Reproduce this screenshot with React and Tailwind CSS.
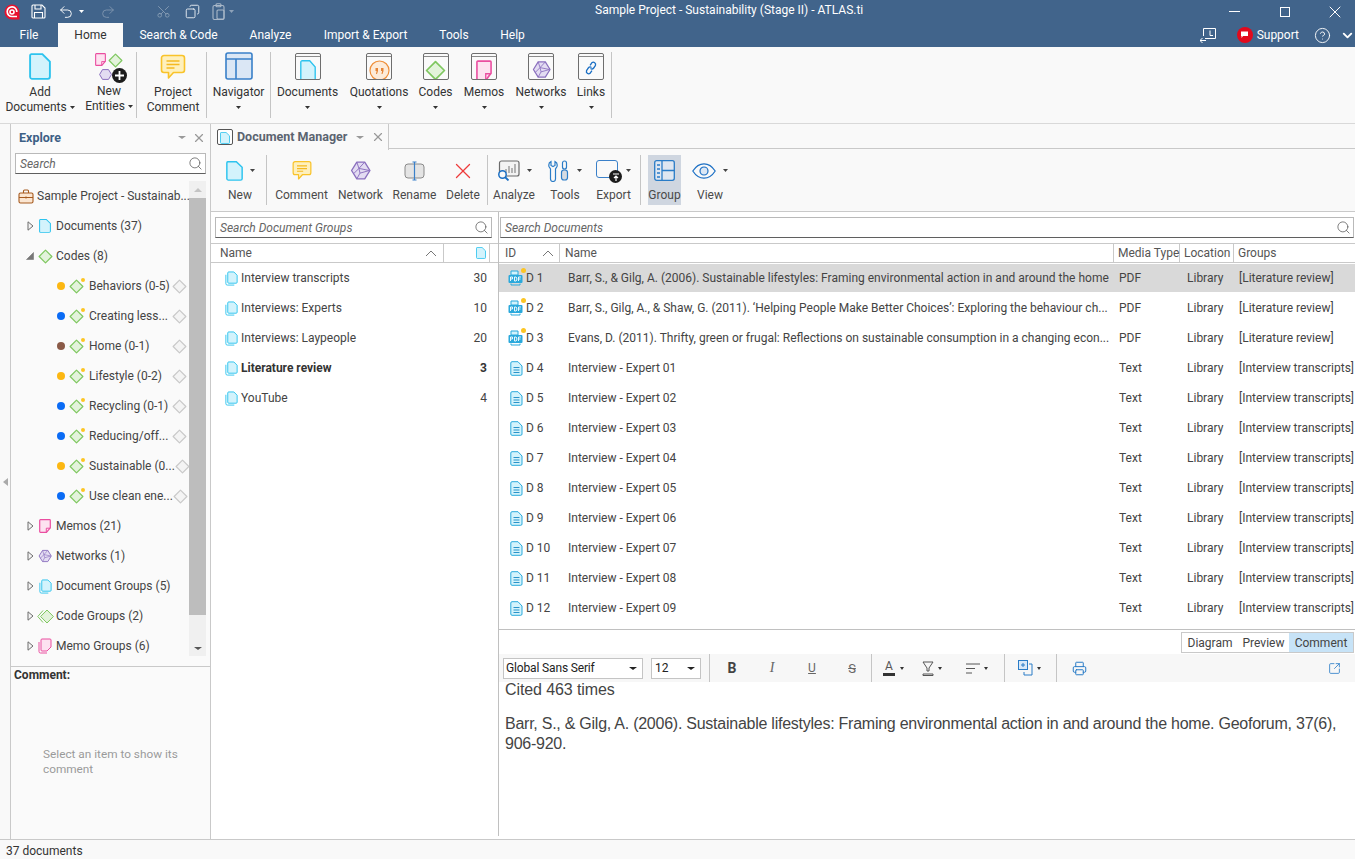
import React from 'react';
import { Undo2, Redo2, Scissors, Copy, Search, X, CircleHelp, ChevronDown, Printer, SquareArrowOutUpRight } from 'lucide-react';

const Caret = ({ c = '#444', s = 5 }) => (
  <svg width={s} height={3} viewBox="0 0 5 3" preserveAspectRatio="none" className="shrink-0"><path d="M0 0h5L2.500 3z" fill={c} /></svg>
);

const DocI = ({ w = 14, h = 18 }) => (
  <svg width={w} height={h} viewBox="0 0 14 18" preserveAspectRatio="none" className="shrink-0"><path d="M1.500.7h7l4.800 5v10.200a1.300 1.300 0 0 1-1.300 1.300H1.800A1.300 1.300 0 0 1 .7 16V1.700A1 1 0 0 1 1.500.7z" fill="#d3f3fc" stroke="#2dc3ee" strokeWidth="1.200" /></svg>
);
const DocGroupI = ({ size = 16 }) => (
  <svg width={size} height={size} viewBox="0 0 16 16" className="shrink-0"><path d="M5 1h5.500L14 4.500V12a1 1 0 0 1-1 1H5a1 1 0 0 1-1-1V2a1 1 0 0 1 1-1z" fill="#d3f3fc" stroke="#2dc3ee" /><path d="M2 4v9.500A1.500 1.500 0 0 0 3.500 15H11" fill="none" stroke="#2dc3ee" /></svg>
);
const DocTextI = () => (
  <svg width={13} height={15} viewBox="0 0 13 15" className="shrink-0"><path d="M2 .7h6L12 5v8a1.300 1.300 0 0 1-1.300 1.300H2A1.300 1.300 0 0 1 .8 13V2A1.300 1.300 0 0 1 2 .7z" fill="#d3f3fc" stroke="#2aa9dc" /><path d="M3.500 6.500h6M3.500 9h6M3.500 11.500h6" stroke="#2a93c9" /></svg>
);
const PdfI = () => (
  <div className="relative w-[16px] h-[16px] shrink-0">
    <svg width={16} height={16} viewBox="0 0 16 16"><path d="M3 1h7v4H3z" fill="#d3f3fc" stroke="#2aa9dc" /><rect x=".5" y="5" width="14" height="8" rx="1" fill="#2aa9dc" /><path d="M3 13.500v1.500h9v-1.500" fill="none" stroke="#2aa9dc" /><path d="M2.500 7v4M2.500 7h2v2h-2M6.500 7v4h1.500l.8-1V8l-.8-1zM10.500 11V7h2.400M10.500 9h2" fill="none" stroke="#fff" strokeWidth=".9" /></svg>
    <span className="absolute right-[-2px] top-[-2px] w-[5px] h-[5px] rounded-full bg-[#fcc524]" />
  </div>
);
const Diamond = ({ size = 15, fill = '#e3f3db', stroke = '#7fc760', dot }) => (
  <div className="relative shrink-0" style={{ width: size, height: size }}>
    <svg width={size} height={size} viewBox="0 0 16 16"><path d="M8 1.200 14.800 8 8 14.800 1.200 8z" fill={fill} stroke={stroke} strokeWidth="1.300" strokeLinejoin="round" /></svg>
    {dot && <span className="absolute right-[-1px] top-[-1px] w-[4px] h-[4px] rounded-full bg-[#fcc524]" />}
  </div>
);
const DoubleDiamond = () => (
  <svg width={17} height={15} viewBox="0 0 17 15" className="shrink-0"><path d="M6 1.500 0.800 7.500 6 13.500" fill="none" stroke="#7fc760" /><path d="M10 1 16.400 7.500 10 14 3.600 7.500z" fill="#e3f3db" stroke="#7fc760" /></svg>
);
const MemoI = ({ w = 12, h = 14 }) => (
  <svg width={w} height={h} viewBox="0 0 12 14" preserveAspectRatio="none" className="shrink-0"><path d="M1.400.7h9.200a.7.7 0 0 1 .7.7v7.400L7.500 13.300H1.400a.7.7 0 0 1-.7-.7V1.400a.7.7 0 0 1 .7-.7z" fill="#fde2f0" stroke="#ea4ea0" strokeWidth="1.200" /><path d="M7.300 13V9.200h4" fill="none" stroke="#ea4ea0" /></svg>
);
const MemoGroupI = () => (
  <svg width={16} height={16} viewBox="0 0 16 16" className="shrink-0"><path d="M5 1h8a1 1 0 0 1 1 1v7l-4 4H5a1 1 0 0 1-1-1V2a1 1 0 0 1 1-1z" fill="#fde2f0" stroke="#ea4ea0" /><path d="M2 4v9.500A1.500 1.500 0 0 0 3.500 15H10" fill="none" stroke="#ea4ea0" /></svg>
);
const NetI = ({ size = 16 }) => (
  <svg width={size} height={size} viewBox="0 0 20 20" className="shrink-0"><path d="M6.500 2h7.500l5 8-5 8H6.500L1.500 10z" fill="#e3dcf2" stroke="#8a6fbe" strokeWidth="1.300" strokeLinejoin="round" /><path d="M6.500 2l2 6-5 5M8.500 8L14 2M8.500 8l10 2-9 2.500M9.500 12.500L6.500 18M9.500 12.500L8.500 8" fill="none" stroke="#8a6fbe" strokeWidth=".9" /></svg>
);
const CommentI = ({ w = 26, h = 26 }) => (
  <svg width={w} height={h} viewBox="0 0 26 26" className="shrink-0"><path d="M4 1.500h18A2.500 2.500 0 0 1 24.500 4v12a2.500 2.500 0 0 1-2.500 2.500h-8.500L8.500 24v-5.500H4A2.500 2.500 0 0 1 1.500 16V4A2.500 2.500 0 0 1 4 1.500z" fill="#fef0bd" stroke="#f9c32a" strokeWidth="1.600" strokeLinejoin="round" /><path d="M6.500 7h13M6.500 10.500h13M6.500 14h8" stroke="#f5b921" strokeWidth="1.500" /></svg>
);
const Frame = ({ children }) => (
  <div className="w-[26px] h-[27px] border-[1.5px] border-[#6e6e6e] rounded-[2px] bg-[#fafafa] flex flex-col overflow-hidden shrink-0">
    <div className="h-[3px] border-b-[1.5px] border-[#8a8a8a] shrink-0" />
    <div className="flex-1 flex justify-center items-start pt-[3px]">{children}</div>
  </div>
);
const Tri = () => (
  <svg width={7} height={10} viewBox="0 0 7 10" className="shrink-0"><path d="M1 .8 6 5 1 9.200z" fill="#f4f4f4" stroke="#6d6d6d" /></svg>
);
const TriOpen = () => (
  <svg width={8} height={8} viewBox="0 0 8 8" className="shrink-0"><path d="M7.500.5v7H.5z" fill="#777" stroke="#777" strokeWidth=".6" /></svg>
);
const Sep = ({ h = 'h-[66px]' }) => <div className={`w-px bg-[#c5c5c5] shrink-0 ${h}`} />;

const Ribbon = ({ w, label, label2, icon, inline, cls = '' }) => (
  <div className={`flex flex-col items-center shrink-0 h-full ${cls}`} style={{ width: w }}>
    <div className="h-[33px] flex items-end justify-center shrink-0">{icon}</div>
    <div className="mt-[5px] leading-[15px] text-center whitespace-nowrap h-[15px]">{label}</div>
    {label2 ? (
      <div className="leading-[15px] flex items-center gap-[3px] whitespace-nowrap">{label2}{inline && <Caret c="#333" />}</div>
    ) : (
      <div className="h-[15px] flex items-center justify-center"><Caret c="#333" /></div>
    )}
  </div>
);

const Tool = ({ w, label, icon, caret, active }) => (
  <div className={`flex flex-col items-center shrink-0 h-[50px] ${active ? 'bg-[#cfd6e0]' : ''}`} style={{ width: w }}>
    <div className="h-[32px] flex items-center justify-center gap-[7px] shrink-0">{icon}{caret && <Caret />}</div>
    <div className="leading-[16px] whitespace-nowrap text-[#4a4a4a]">{label}</div>
  </div>
);

const SearchBox = ({ w, text }) => (
  <div className="h-[21px] border border-[#b9b9b9] border-b-[#5f5f5f] bg-white flex items-center justify-between pl-[4px] pr-[2px]" style={w ? { width: w } : undefined}>
    <span className="italic text-[#666]">{text}</span>
    <Search size={15} strokeWidth={1.200} className="text-[#555]" />
  </div>
);

const TreeTop = ({ open, icon, label }) => (
  <div className="h-[30px] flex items-center text-[#444]">
    <div className="w-[27px] flex justify-end shrink-0 pr-[4px]">{open ? <TriOpen /> : <Tri />}</div>
    <div className="w-[18px] flex justify-center shrink-0 ml-[-2px] mr-[1px]">{icon}</div>
    <span className="ml-[1px] whitespace-nowrap">{label}</span>
  </div>
);
const TreeChild = ({ color, label }) => (
  <div className="h-[30px] flex items-center text-[#444] pl-[46px] pr-[2px]">
    <span className="w-[8px] h-[8px] rounded-full shrink-0" style={{ backgroundColor: color }} />
    <div className="ml-[4px] mr-[5px]"><Diamond dot size={15} /></div>
    <span className="whitespace-nowrap flex-1">{label}</span>
    <Diamond size={15} fill="#f4f4f4" stroke="#c9c9c9" />
  </div>
);

const groups = [
  ['Interview transcripts', 30], ['Interviews: Experts', 10], ['Interviews: Laypeople', 20], ['Literature review', 3, true], ['YouTube', 4],
];
const lit = '[Literature review]';
const tr = '[Interview transcripts]';
const docs = [
  ['D 1', 'Barr, S., & Gilg, A. (2006). Sustainable lifestyles: Framing environmental action in and around the home', 'PDF', lit, true],
  ['D 2', 'Barr, S., Gilg, A., & Shaw, G. (2011). ‘Helping People Make Better Choices’: Exploring the behaviour ch...', 'PDF', lit],
  ['D 3', 'Evans, D. (2011). Thrifty, green or frugal: Reflections on sustainable consumption in a changing econ...', 'PDF', lit],
  ['D 4', 'Interview - Expert 01', 'Text', tr], ['D 5', 'Interview - Expert 02', 'Text', tr], ['D 6', 'Interview - Expert 03', 'Text', tr],
  ['D 7', 'Interview - Expert 04', 'Text', tr], ['D 8', 'Interview - Expert 05', 'Text', tr], ['D 9', 'Interview - Expert 06', 'Text', tr],
  ['D 10', 'Interview - Expert 07', 'Text', tr], ['D 11', 'Interview - Expert 08', 'Text', tr], ['D 12', 'Interview - Expert 09', 'Text', tr],
];

const TopTab = ({ w, label, active }) => (
  <div className={`h-full flex items-center justify-center shrink-0 ${active ? 'bg-[#f9f9f9] text-[#333]' : 'text-white'}`} style={{ width: w }}>{label}</div>
);

export default function App() {
  return (
    <div className="w-[1355px] h-[859px] overflow-hidden bg-white flex flex-col font-['Roboto',sans-serif] text-[12px] text-[#444] antialiased">
      {/* title bar */}
      <div className="h-[23px] bg-[#41648b] flex items-center shrink-0 relative text-white">
        <div className="w-[20px] flex justify-end shrink-0">
          <svg width={16} height={16} viewBox="0 0 16 16" fill="none">
            <path d="M8 .5a7.500 7.500 0 0 0 0 15h7.500V8A7.500 7.500 0 0 0 8 .5z" fill="#e8112d" />
            <path d="M13 12.500H8A4.800 4.800 0 1 1 12.800 8" stroke="#fff" strokeWidth="1.700" />
            <circle cx="8" cy="8" r="2" stroke="#fff" strokeWidth="1.600" />
          </svg>
        </div>
        <div className="ml-[11px] w-[14px]">
          <svg width={15} height={15} viewBox="0 0 15 15" fill="none" stroke="#fff" strokeWidth="1.100"><path d="M2 1h9l3 3v9a1 1 0 0 1-1 1H2a1 1 0 0 1-1-1V2a1 1 0 0 1 1-1z" /><path d="M4 1v4h6V1M3.500 14V8.500h8V14" /></svg>
        </div>
        <div className="ml-[13px] flex items-center gap-[5px]"><Undo2 size={16} strokeWidth={1.400} /><Caret c="#fff" /></div>
        <div className="ml-[16px]"><Redo2 size={16} strokeWidth={1.400} className="text-[#7e94ae]" /></div>
        <div className="ml-[40px]"><Scissors size={15} strokeWidth={1.300} className="text-[#8ea2b9] -rotate-90" /></div>
        <div className="ml-[14px]"><Copy size={15} strokeWidth={1.500} className="text-[#e8edf2] scale-x-[-1]" /></div>
        <div className="ml-[12px] flex items-center gap-[4px]">
          <svg width={13} height={17} viewBox="0 0 13 17" fill="none" stroke="#a9b8c9" strokeWidth="1.100"><rect x="1" y="2.500" width="11" height="14" rx="1.500" /><rect x="4" y=".7" width="5" height="3" rx="1" /><rect x="5" y="7" width="7" height="9" rx="1" /></svg>
          <Caret c="#8ea2b9" />
        </div>
        <div className="absolute left-[595px] top-[2px] leading-[17px] whitespace-nowrap">Sample Project - Sustainability (Stage II) - ATLAS.ti</div>
        <div className="ml-auto flex items-center h-full">
          <div className="w-[40px] flex justify-center"><div className="w-[11px] h-px bg-white" /></div>
          <div className="w-[11px]" />
          <div className="w-[40px] flex justify-center"><div className="w-[10px] h-[10px] border border-white" /></div>
          <div className="w-[10px]" />
          <div className="w-[40px] flex justify-center"><X size={20} strokeWidth={1.200} /></div>
        </div>
      </div>
      {/* tabs */}
      <div className="h-[24px] bg-[#41648b] flex items-center shrink-0 text-white">
        <TopTab w={58} label="File" />
        <TopTab w={65} label="Home" active />
        <TopTab w={111} label="Search & Code" />
        <TopTab w={73} label="Analyze" />
        <TopTab w={117} label="Import & Export" />
        <TopTab w={60} label="Tools" />
        <TopTab w={57} label="Help" />
        <div className="ml-auto flex items-center h-full">
          <svg width={17} height={17} viewBox="0 0 17 17" fill="none" stroke="#fff" strokeWidth="1"><path d="M3.500 9V1.500h12v10H5" /><path d="M10 3.500v5H13M0 13.500h6M2.500 11 0 13.500 2.500 16" /></svg>
          <div className="ml-[20px] w-[16px] h-[16px] rounded-full bg-[#e3091c] flex items-center justify-center">
            <svg width={9} height={8} viewBox="0 0 9 8"><path d="M1 .5h7v4.500H3L1.500 7V5H1z" fill="#fff" /></svg>
          </div>
          <span className="ml-[4px]">Support</span>
          <CircleHelp size={17} strokeWidth={1.300} className="ml-[15px]" />
          <ChevronDown size={15} strokeWidth={3} className="ml-[9px] mr-[0px]" />
        </div>
      </div>
      {/* ribbon */}
      <div className="h-[77px] bg-[#f9f9f9] border-b border-[#d9d9d9] flex items-center shrink-0 text-[#333]">
        <Ribbon w={80} label="Add" label2="Documents" inline icon={<DocI w={22} h={27} />} />
        <div className="flex flex-col items-center shrink-0 h-full pl-[2px]" style={{ width: 56 }}>
          <div className="h-[32px] w-[29px] mt-[6px] relative shrink-0">
            <div className="flex gap-[2px] items-start"><MemoI w={11} h={13} /><Diamond size={15} /></div>
            <div className="mt-[1px] ml-[4px]">
              <svg width={13} height={11} viewBox="0 0 13 11"><path d="M3.500 .6h6l3 4.900-3 4.900h-6L.6 5.500z" fill="#e3dcf2" stroke="#8a6fbe" /></svg>
            </div>
            <div className="absolute right-[-3px] top-[15px] w-[15px] h-[15px] rounded-full bg-[#1c1c1c] flex items-center justify-center">
              <svg width={9} height={9} viewBox="0 0 9 9"><path d="M4.500 0v9M0 4.500h9" stroke="#fff" strokeWidth="1.800" /></svg>
            </div>
          </div>
          <div className="leading-[15px] mt-[-1px] h-[15px]">New</div>
          <div className="leading-[15px] flex items-center gap-[3px]">Entities<Caret c="#333" /></div>
        </div>
        <Sep />
        <Ribbon w={69} cls="pl-[3px]" label="Project" label2="Comment" icon={<CommentI />} />
        <Sep />
        <Ribbon w={63} label="Navigator" icon={
          <svg width={28} height={28} viewBox="0 0 28 28"><rect x="1" y="1" width="26" height="26" rx="2" fill="#dbe7f5" stroke="#3a80c9" strokeWidth="1.600" /><path d="M1 7h26M11 7v20" stroke="#3a80c9" strokeWidth="1.600" /></svg>
        } />
        <Sep />
        <Ribbon w={73} label="Documents" icon={<Frame><DocI w={16} h={22} /></Frame>} />
        <Ribbon w={70} label="Quotations" icon={<Frame>
          <svg width={21} height={21} viewBox="0 0 21 21" fill="none"><circle cx="10.500" cy="10.500" r="9.500" fill="#fdebd9" stroke="#ef8f3a" strokeWidth="1.200" /><path d="M6.500 8h2.500v3l-1 3h-1l.6-3H6.500zM12 8h2.500v3l-1 3h-1l.6-3H12z" fill="#e58435" /></svg>
        </Frame>} />
        <Ribbon w={43} label="Codes" icon={<Frame><Diamond size={21} /></Frame>} />
        <Ribbon w={54} label="Memos" icon={<Frame><MemoI w={16} h={21} /></Frame>} />
        <Ribbon w={60} label="Networks" icon={<Frame><NetI size={19} /></Frame>} />
        <Ribbon w={40} label="Links" icon={<Frame>
          <svg width={14} height={16} viewBox="0 0 14 18" fill="none" stroke="#1b6fc4" strokeWidth="1.500"><path d="M6 6l2-3a2.600 2.600 0 0 1 4 3l-2 3a2.600 2.600 0 0 1-3.600.6M8 12l-2 3a2.600 2.600 0 0 1-4-3l2-3a2.600 2.600 0 0 1 3.600-.6" /></svg>
        </Frame>} />
        <Sep />
      </div>
      {/* body */}
      <div className="flex-1 flex min-h-0">
        <div className="w-[10px] shrink-0 flex items-center justify-center bg-[#f9f9f9]">
          <svg width={5} height={8} viewBox="0 0 5 8"><path d="M5 0v8L0 4z" fill="#aaa" /></svg>
        </div>
        {/* explore */}
        <div className="w-[201px] shrink-0 border-x border-[#c9c9c9] bg-[#fafafa] flex flex-col">
          <div className="h-[29px] flex items-center justify-between pl-[8px] pr-[4px] shrink-0">
            <span className="font-bold text-[#3d5f85] text-[12.500px]">Explore</span>
            <div className="flex items-center gap-[6px] mb-[2px]"><Caret c="#999" s={8} /><X size={14} className="text-[#999]" /></div>
          </div>
          <div className="px-[4px] shrink-0"><SearchBox text="Search" /></div>
          <div className="h-[7px] shrink-0" />
          <div className="h-[485px] flex shrink-0">
            <div className="flex-1 min-w-0 overflow-hidden">
              <div className="h-[30px] flex items-center pl-[7px] whitespace-nowrap text-[#444]">
                <svg width={16} height={15} viewBox="0 0 16 15" fill="#fbe6d2" stroke="#a65a1e" strokeWidth="1.100" className="shrink-0"><rect x="1" y="4" width="14" height="10" rx="1.500" /><path d="M5.500 4V2a1 1 0 0 1 1-1h3a1 1 0 0 1 1 1v2M1 8.500h14M8 7.500v2" fill="none" /></svg>
                <span className="ml-[3px]">Sample Project - Sustainab...</span>
              </div>
              <TreeTop icon={<DocI w={12} h={14} />} label="Documents (37)" />
              <TreeTop open icon={<Diamond size={15} />} label="Codes (8)" />
              <TreeChild color="#fcb712" label="Behaviors (0-5)" />
              <TreeChild color="#0a6bf5" label="Creating less..." />
              <TreeChild color="#8a5a47" label="Home (0-1)" />
              <TreeChild color="#fcb712" label="Lifestyle (0-2)" />
              <TreeChild color="#0a6bf5" label="Recycling (0-1)" />
              <TreeChild color="#0a6bf5" label="Reducing/off..." />
              <TreeChild color="#fcb712" label="Sustainable (0..." />
              <TreeChild color="#0a6bf5" label="Use clean ene..." />
              <TreeTop icon={<MemoI />} label="Memos (21)" />
              <TreeTop icon={<NetI size={14} />} label="Networks (1)" />
              <TreeTop icon={<DocGroupI size={15} />} label="Document Groups (5)" />
              <TreeTop icon={<DoubleDiamond />} label="Code Groups (2)" />
              <TreeTop icon={<MemoGroupI />} label="Memo Groups (6)" />
            </div>
            <div className="w-[17px] shrink-0 mr-[4px] bg-[#f0f0f0] flex flex-col h-[475px]">
              <div className="h-[17px] flex items-center justify-center shrink-0"><svg width={8} height={4} viewBox="0 0 8 4"><path d="M4 0l4 4H0z" fill="#c4c4c4" /></svg></div>
              <div className="h-[417px] bg-[#bdbdbd] shrink-0" />
              <div className="flex-1 flex items-end justify-center pb-[6px]"><Caret c="#555" s={8} /></div>
            </div>
          </div>
          <div className="border-t border-[#c9c9c9] shrink-0 pl-[3px] pt-[1px] font-bold text-[#333] leading-[15px]">Comment:</div>
          <div className="pl-[32px] pt-[64px] text-[#9a9a9a] leading-[15px] text-[11.800px]">Select an item to show its<br />comment</div>
        </div>
        {/* main */}
        <div className="flex-1 min-w-0 flex flex-col">
          <div className="h-[25px] flex bg-[#f9f9f9] shrink-0">
            <div className="w-[178px] h-[26px] bg-[#f9f9f9] border-r border-[#c9c9c9] flex items-center pl-[6px] z-10">
              <div className="w-[16px] h-[16px] border border-[#555] rounded-[2px] bg-white flex items-end justify-center overflow-hidden"><DocI w={10} h={12} /></div>
              <span className="ml-[4px] font-bold text-[#5b6470] text-[12.500px]">Document Manager</span>
              <div className="ml-[9px] flex items-center gap-[7px]"><Caret c="#999" s={8} /><X size={14} className="text-[#999]" /></div>
            </div>
            <div className="flex-1 border-b border-[#c9c9c9]" />
          </div>
          {/* toolbar */}
          <div className="h-[63px] bg-[#f9f9f9] border-b border-[#c9c9c9] flex items-center shrink-0 pb-[1px]">
            <div className="w-[3px]" />
            <Tool w={52} label="New" caret icon={<DocI w={17} h={20} />} />
            <Sep h="h-[50px]" />
            <div className="w-[5px]" />
            <Tool w={59} label="Comment" icon={<CommentI w={20} h={21} />} />
            <Tool w={59} label="Network" icon={<NetI size={21} />} />
            <Tool w={49} label="Rename" icon={
              <svg width={21} height={20} viewBox="0 0 21 20" fill="none"><rect x="1" y="3" width="19" height="14" rx="3" fill="#e4e4e4" stroke="#8a8a8a" /><path d="M10.500 1v18M8.500 1h4M8.500 19h4" stroke="#3a80c9" strokeWidth="1.200" /></svg>
            } />
            <Tool w={48} label="Delete" icon={<X size={26} strokeWidth={1.200} className="text-[#ee3b3b]" />} />
            <Sep h="h-[50px]" />
            <Tool w={52} label="Analyze" caret icon={
              <svg width={23} height={21} viewBox="0 0 23 21" fill="none"><rect x="2.500" y="1" width="19.500" height="15" rx="2" fill="#f3f3f3" stroke="#6b6b6b" strokeWidth="1.200" /><path d="M9 13V9M12 13V6M15 13V8M18 13V4" stroke="#8a8a8a" strokeWidth="1.200" /><circle cx="5.500" cy="14.500" r="3.700" fill="#f9f9f9" stroke="#1b6fc4" strokeWidth="1.500" /><path d="M8 17l3.500 3.500" stroke="#1b6fc4" strokeWidth="1.800" /></svg>
            } />
            <Tool w={50} label="Tools" caret icon={
              <svg width={22} height={22} viewBox="0 0 22 22" fill="none" stroke="#2a7cc7" strokeWidth="1.200"><path d="M3 1.500v4l2 1 2-1v-4c2 1 2.500 3 2 5L7.500 9v10a2 2 0 0 1-5 0V9L1 6.500c-.5-2 0-4 2-5z" /><rect x="14.500" y="1" width="4" height="8" rx="2" stroke="#2a7cc7" /><rect x="13.500" y="10" width="6" height="10" rx="2.500" fill="#d5dbe2" stroke="#2a7cc7" /></svg>
            } />
            <Tool w={47} label="Export" caret icon={
              <div className="relative w-[23px] h-[21px]">
                <div className="w-[22px] h-[18px] border-[1.500px] border-[#3a80c9] rounded-[3px]" />
                <div className="absolute right-[-3px] bottom-[-2px] w-[13px] h-[13px] rounded-full bg-[#1c1c1c] flex items-center justify-center">
                  <svg width={8} height={8} viewBox="0 0 8 8" fill="none" stroke="#fff" strokeWidth="1.200"><path d="M1 1h6M4 8V3M2 5l2-2 2 2" /></svg>
                </div>
              </div>
            } />
            <div className="w-[3px]" />
            <Sep h="h-[50px]" />
            <div className="w-[7px]" />
            <Tool w={33} label="Group" active icon={
              <svg width={21} height={21} viewBox="0 0 21 21" fill="#dfe7f1" stroke="#2a7cc7" strokeWidth="1.300"><rect x=".7" y=".7" width="19.600" height="19.600" rx="2" /><path d="M8 1v19M8 10.500h12M3 5h3M3 9h3M3 13h3M3 17h3" /></svg>
            } />
            <div className="w-[9px]" />
            <Tool w={40} label="View" caret icon={
              <svg width={24} height={16} viewBox="0 0 24 16" fill="none" stroke="#1b6fc4" strokeWidth="1.200"><path d="M.8 8C4 3 8 .8 12 .8S20 3 23.200 8C20 13 16 15.200 12 15.200S4 13 .8 8z" /><circle cx="12" cy="8" r="4" fill="#dbe7f5" /></svg>
            } />
          </div>
          {/* content */}
          <div className="flex-1 min-h-0 flex">
            <div className="w-[288px] shrink-0 flex flex-col border-r border-[#c0c0c0] mb-[3px] bg-white">
              <div className="h-[31px] flex items-center pl-[4px] shrink-0"><SearchBox w={277} text="Search Document Groups" /></div>
              <div className="h-[20px] flex items-stretch border-y border-[#c9c9c9] shrink-0 text-[#555]">
                <div className="w-[233px] flex items-center justify-between pl-[9px] pr-[6px] border-r border-[#c9c9c9]">
                  <span>Name</span>
                  <svg width={12} height={7} viewBox="0 0 12 7" fill="none" stroke="#777"><path d="M1 6l5-5 5 5" /></svg>
                </div>
                <div className="w-[46px] flex items-center justify-end pr-[3px] border-r border-[#c9c9c9]"><DocI w={10} h={12} /></div>
              </div>
              {groups.map(([n, c, b]) => (
                <div key={n} className={`h-[30px] flex items-center justify-between pl-[13px] pr-[11px] shrink-0 ${b ? 'font-bold text-[#333]' : ''}`}>
                  <div className="flex items-center gap-[2px]"><DocGroupI size={15} /><span>{n}</span></div>
                  <span>{c}</span>
                </div>
              ))}
            </div>
            <div className="flex-1 min-w-0 flex flex-col">
              <div className="h-[31px] flex items-center pl-[1px] shrink-0"><SearchBox w={854} text="Search Documents" /></div>
              <div className="h-[20px] flex items-stretch border-y border-[#c9c9c9] shrink-0 text-[#555]">
                <div className="w-[61px] pl-[6px] pr-[5px] flex items-center justify-between border-r border-[#c9c9c9]"><span>ID</span><svg width={12} height={7} viewBox="0 0 12 7" fill="none" stroke="#777"><path d="M1 6l5-5 5 5" /></svg></div>
                <div className="w-[554px] pl-[5px] flex items-center border-r border-[#c9c9c9]">Name</div>
                <div className="w-[66px] pl-[4px] flex items-center border-r border-[#c9c9c9] whitespace-nowrap">Media Type</div>
                <div className="w-[54px] pl-[4px] flex items-center border-r border-[#c9c9c9]">Location</div>
                <div className="flex-1 pl-[4px] flex items-center">Groups</div>
              </div>
              <div className="h-[366px] shrink-0">
                {docs.map(([id, name, type, g, sel]) => (
                  <div key={id} className="h-[30px] flex items-center">
                    <div className={`h-[28px] flex-1 min-w-0 flex items-center whitespace-nowrap overflow-hidden ${sel ? 'bg-[#d9d9d9]' : ''}`}>
                      <div className="w-[62px] pl-[9px] flex items-center gap-[2px] shrink-0">{type === 'PDF' ? <PdfI /> : <div className="w-[16px] flex justify-center"><DocTextI /></div>}<span>{id}</span></div>
                      <div className="w-[558px] pl-[7px] shrink-0">{name}</div>
                      <div className="w-[68px] shrink-0">{type}</div>
                      <div className="w-[52px] shrink-0">Library</div>
                      <div className="flex-1">{g}</div>
                    </div>
                  </div>
                ))}
              </div>
              <div className="border-t border-[#c0c0c0] shrink-0 h-[25px] flex justify-end items-start pt-[2px]">
                <div className="h-[21px] flex border border-[#c9c9c9] text-[#444] mr-[1px]">
                  <div className="w-[56px] flex items-center justify-center">Diagram</div>
                  <div className="w-[51px] flex items-center justify-center">Preview</div>
                  <div className="w-[64px] flex items-center justify-center bg-[#c7e3f7]">Comment</div>
                </div>
              </div>
              {/* editor toolbar */}
              <div className="h-[28px] bg-[#f7f7f7] flex items-center shrink-0 pl-[4px]">
                <div className="w-[140px] h-[21px] bg-white border border-[#c4c4c4] flex items-center justify-between pl-[2px] pr-[5px] text-[#222] tracking-[-0.15px]">
                  <span>Global Sans Serif</span><Caret c="#222" s={8} />
                </div>
                <div className="ml-[8px] w-[50px] h-[21px] bg-white border border-[#c4c4c4] flex items-center justify-between pl-[3px] pr-[5px] text-[#222]">
                  <span>12</span><Caret c="#222" s={8} />
                </div>
                <div className="w-[8px]" />
                <Sep h="h-[28px]" />
                <div className="w-[15px]" />
                <span className="w-[14px] text-center font-bold text-[14px] leading-none text-[#444]">B</span>
                <div className="w-[26px]" />
                <span className="w-[14px] text-center italic text-[14px] leading-none text-[#666] font-['Liberation_Serif',serif]">I</span>
                <div className="w-[26px]" />
                <span className="w-[14px] text-center underline leading-none text-[#666]">U</span>
                <div className="w-[26px]" />
                <span className="w-[14px] text-center line-through leading-none text-[#666] text-[13px]">S</span>
                <div className="w-[12px]" />
                <Sep h="h-[28px]" />
                <div className="w-[11px]" />
                <div className="flex flex-col items-center w-[12px] leading-[11px] text-[#555]">A<span className="w-[12px] h-[3px] bg-[#333] mt-[1px]" /></div>
                <div className="w-[5px]" /><Caret c="#333" s={4} />
                <div className="w-[18px]" />
                <svg width={12} height={15} viewBox="0 0 12 15" fill="none" stroke="#555"><path d="M1 1h10L7 7v3H5V7zM1 13h10v1.500H1z" /></svg>
                <div className="w-[4px]" /><Caret c="#333" s={4} />
                <div className="w-[24px]" />
                <svg width={14} height={11} viewBox="0 0 14 11" fill="none" stroke="#555"><path d="M0 1h14M0 5.500h9M0 10h6" /></svg>
                <div className="w-[4px]" /><Caret c="#333" s={4} />
                <div className="w-[16px]" />
                <Sep h="h-[28px]" />
                <div className="w-[13px]" />
                <svg width={15} height={16} viewBox="0 0 15 16" fill="none" stroke="#2a7cc7"><rect x=".5" y=".5" width="9" height="9" fill="#d9e9f8" /><path d="M3 5h4M5 3v4M11 4h3v11H6v-3" /></svg>
                <div className="w-[4px]" /><Caret c="#333" s={4} />
                <div className="w-[15px]" />
                <Sep h="h-[28px]" />
                <div className="w-[15px]" />
                <Printer size={15} strokeWidth={1.600} className="text-[#2a7cc7]" />
                <div className="ml-auto mr-[14px]"><SquareArrowOutUpRight size={13} strokeWidth={1.500} className="text-[#2a7cc7]" /></div>
              </div>
              <div className="pl-[6px] pr-[10px] font-['Liberation_Sans',sans-serif] text-[16px] leading-[20px] text-[#444] overflow-hidden">
                <p className="mb-[14px] mt-[-2px] tracking-[-0.1px]">Cited 463 times</p>
                <p className="tracking-[-0.25px]">Barr, S., &amp; Gilg, A. (2006). Sustainable lifestyles: Framing environmental action in and around the home. Geoforum, 37(6), 906-920.</p>
              </div>
            </div>
          </div>
        </div>
      </div>
      {/* status */}
      <div className="h-[20px] border-t border-[#c9c9c9] bg-[#f9f9f9] flex items-center pl-[6px] pt-[3px] shrink-0 text-[#333]">37 documents</div>
    </div>
  );
}
